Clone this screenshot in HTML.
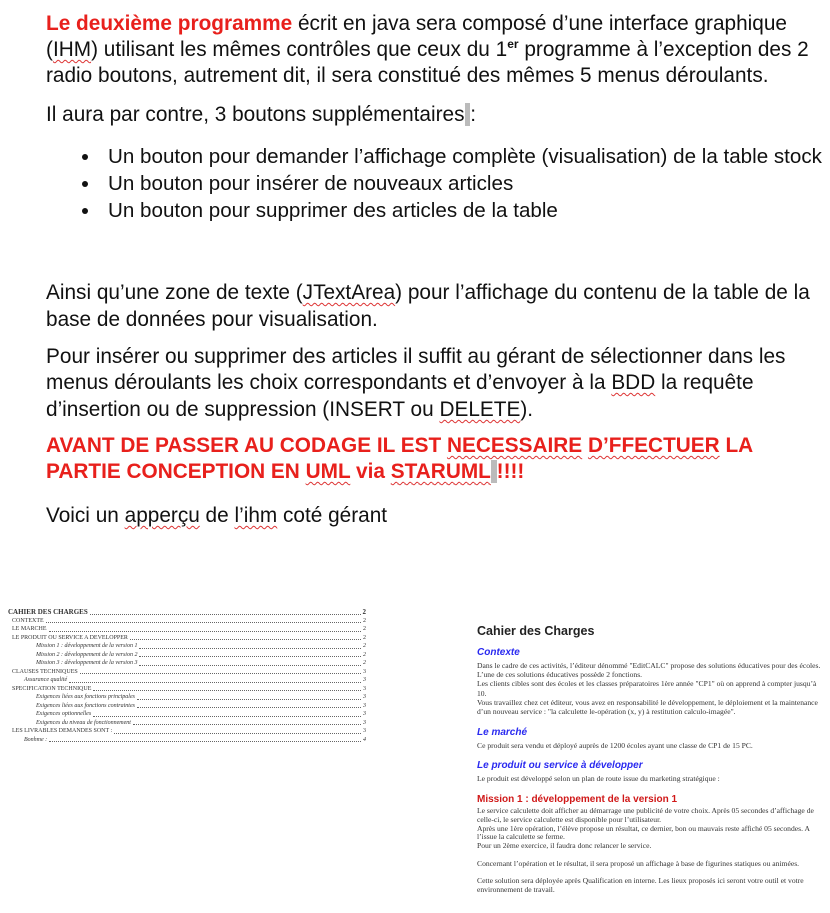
<!DOCTYPE html>
<html><head><meta charset="utf-8"><style>
body{margin:0;width:830px;height:913px;background:#fff;position:relative;overflow:hidden;font-family:"Liberation Sans",Arial,sans-serif;color:#111}
.l{position:absolute;left:46px;white-space:nowrap;font-size:20.8px;line-height:26px}
.r{color:#e8201c;font-weight:bold}
.b{position:absolute;left:82px;width:6px;height:6px;border-radius:50%;background:#111}
.sq{text-decoration:underline wavy #d33;text-decoration-thickness:1px;text-underline-offset:3px}
.s{position:absolute;white-space:nowrap;font-family:"Liberation Serif",serif;font-size:7.6px;line-height:9.2px;color:#333}
.toc{position:absolute;left:8px;width:358px;font-family:"Liberation Serif",serif;font-size:6px;color:#333;line-height:8.5px}
.toc div{display:flex;white-space:nowrap}
.toc div span.d{flex:1;border-bottom:1px dotted #666;margin:0 2px 2px}
sup{line-height:0;vertical-align:0;position:relative;top:-8px;font-size:12px;font-weight:bold}
</style></head><body>
<div class="l" style="top:11px"><span class="r">Le deuxième programme</span> écrit en java sera composé d’une interface graphique</div>
<div class="l" style="top:37px">(<span class="sq">IHM</span>) utilisant les mêmes contrôles que ceux du 1<sup>er</sup> programme à l’exception des 2</div>
<div class="l" style="top:63px">radio boutons, autrement dit, il sera constitué des mêmes 5 menus déroulants.</div>
<div class="l" style="top:102px">Il aura par contre, 3 boutons supplémentaires<span style="background:#bbb">&nbsp;</span>:</div>
<div class="b" style="top:154px"></div><div class="l" style="left:108px;top:144px;font-size:20.6px">Un bouton pour demander l’affichage complète (visualisation) de la table stock</div>
<div class="b" style="top:181px"></div><div class="l" style="left:108px;top:171px;font-size:20.6px">Un bouton pour insérer de nouveaux articles</div>
<div class="b" style="top:208px"></div><div class="l" style="left:108px;top:198px;font-size:20.6px">Un bouton pour supprimer des articles de la table</div>
<div class="l" style="top:280px">Ainsi qu’une zone de texte (<span class="sq">JTextArea</span>) pour l’affichage du contenu de la table de la</div>
<div class="l" style="top:307px">base de données pour visualisation.</div>
<div class="l" style="top:344px">Pour insérer ou supprimer des articles il suffit au gérant de sélectionner dans les</div>
<div class="l" style="top:370px">menus déroulants les choix correspondants et d’envoyer à la <span class="sq">BDD</span> la requête</div>
<div class="l" style="top:397px">d’insertion ou de suppression (INSERT ou <span class="sq">DELETE</span>).</div>
<div class="l r" style="top:433px">AVANT DE PASSER AU CODAGE IL EST <span class="sq">NECESSAIRE</span> <span class="sq">D’FFECTUER</span> LA</div>
<div class="l r" style="top:459px">PARTIE CONCEPTION EN <span class="sq">UML</span> via <span class="sq">STARUML</span><span style="background:#bbb">&nbsp;</span>!!!!</div>
<div class="l" style="top:503px">Voici un <span class="sq">apperçu</span> de <span class="sq">l’ihm</span> coté gérant</div>

<div class="toc" style="top:608px">
<div style="font-weight:bold;font-size:7px">CAHIER DES CHARGES<span class="d"></span>2</div>
<div style="padding-left:4px">CONTEXTE<span class="d"></span>2</div>
<div style="padding-left:4px">LE MARCHE<span class="d"></span>2</div>
<div style="padding-left:4px">LE PRODUIT OU SERVICE A DEVELOPPER<span class="d"></span>2</div>
<div style="padding-left:28px;font-style:italic">Mission 1 : développement de la version 1<span class="d"></span>2</div>
<div style="padding-left:28px;font-style:italic">Mission 2 : développement de la version 2<span class="d"></span>2</div>
<div style="padding-left:28px;font-style:italic">Mission 3 : développement de la version 3<span class="d"></span>2</div>
<div style="padding-left:4px">CLAUSES TECHNIQUES<span class="d"></span>3</div>
<div style="padding-left:16px;font-style:italic">Assurance qualité<span class="d"></span>3</div>
<div style="padding-left:4px">SPECIFICATION TECHNIQUE<span class="d"></span>3</div>
<div style="padding-left:28px;font-style:italic">Exigences liées aux fonctions principales<span class="d"></span>3</div>
<div style="padding-left:28px;font-style:italic">Exigences liées aux fonctions contraintes<span class="d"></span>3</div>
<div style="padding-left:28px;font-style:italic">Exigences optionnelles<span class="d"></span>3</div>
<div style="padding-left:28px;font-style:italic">Exigences du niveau de fonctionnement<span class="d"></span>3</div>
<div style="padding-left:4px">LES LIVRABLES DEMANDES SONT :<span class="d"></span>3</div>
<div style="padding-left:16px;font-style:italic">Bonhme :<span class="d"></span>4</div>
</div>

<div style="position:absolute;left:477px;top:624px;font-size:12.5px;font-weight:bold;color:#222">Cahier des Charges</div>
<div style="position:absolute;left:477px;top:647px;font-size:10px;font-weight:bold;font-style:italic;color:#2a2af0">Contexte</div>
<div class="s" style="left:477px;top:661px">Dans le cadre de ces activités, l’éditeur dénommé "EditCALC" propose des solutions éducatives pour des écoles.<br>L’une de ces solutions éducatives possède 2 fonctions.<br>Les clients cibles sont des écoles et les classes préparatoires 1ère année "CP1" où on apprend à compter jusqu’à<br>10.<br>Vous travaillez chez cet éditeur, vous avez en responsabilité le développement, le déploiement et la maintenance<br>d’un nouveau service : "la calculette le-opération (x, y) à restitution calculo-imagée".</div>
<div style="position:absolute;left:477px;top:727px;font-size:10px;font-weight:bold;font-style:italic;color:#2a2af0">Le marché</div>
<div class="s" style="left:477px;top:741px">Ce produit sera vendu et déployé auprès de 1200 écoles ayant une classe de CP1 de 15 PC.</div>
<div style="position:absolute;left:477px;top:760px;font-size:10px;font-weight:bold;font-style:italic;color:#2a2af0">Le produit ou service à développer</div>
<div class="s" style="left:477px;top:774px">Le produit est développé selon un plan de route issue du marketing stratégique :</div>
<div style="position:absolute;left:477px;top:794px;font-size:10px;font-weight:bold;color:#d01818">Mission 1 : développement de la version 1</div>
<div class="s" style="left:477px;top:807px;line-height:8.8px">Le service calculette doit afficher au démarrage une publicité de votre choix. Après 05 secondes d’affichage de<br>celle-ci, le service calculette est disponible pour l’utilisateur.<br>Après une 1ère opération, l’élève propose un résultat, ce dernier, bon ou mauvais reste affiché 05 secondes. A<br>l’issue la calculette se ferme.<br>Pour un 2ème exercice, il faudra donc relancer le service.<br><br>Concernant l’opération et le résultat, il sera proposé un affichage à base de figurines statiques ou animées.<br><br>Cette solution sera déployée après Qualification en interne. Les lieux proposés ici seront votre outil et votre<br>environnement de travail.</div>
</body></html>
